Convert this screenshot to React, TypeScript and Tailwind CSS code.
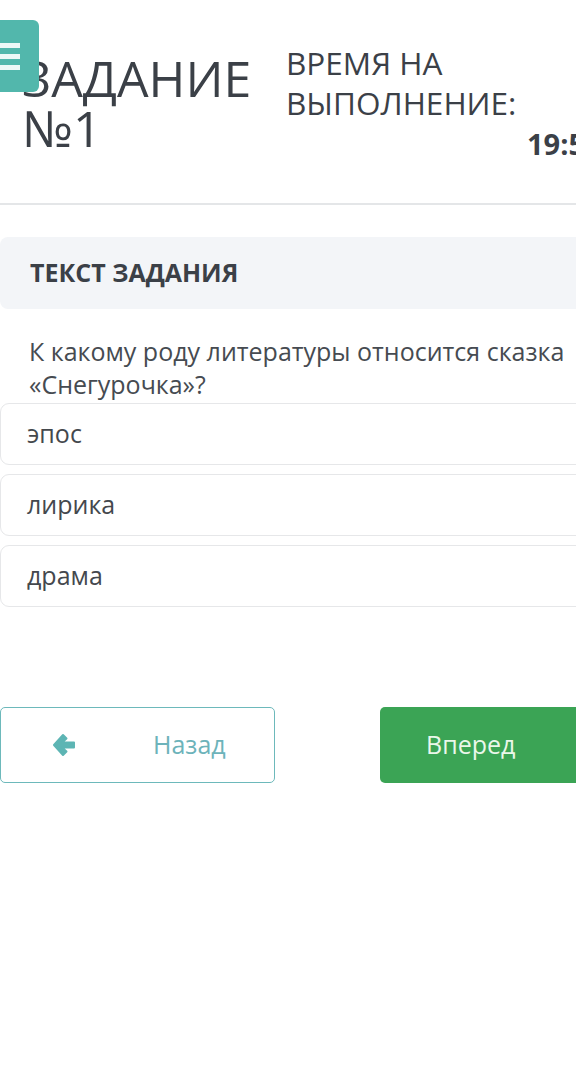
import React from 'react';

const options = ['эпос', 'лирика', 'драма'];

function MenuButton() {
  return (
    <button className="absolute left-0 top-[20px] w-[39px] h-[72px] bg-[#52b7ac] rounded-r-[6px] flex flex-col justify-center gap-[6px] pr-[19px]">
      <span className="block h-[5px] w-[20px] bg-white/90" />
      <span className="block h-[5px] w-[20px] bg-white/90" />
      <span className="block h-[5px] w-[20px] bg-white/90" />
    </button>
  );
}

export default function App() {
  return (
    <div className="relative w-[576px] h-[1080px] overflow-hidden bg-white font-['Open_Sans',sans-serif]">
      <div className="w-[640px]">
        {/* Header */}
        <div className="flex pt-[48px] h-[205px] border-b-2 border-[#e4e6e8]">
          <h1 className="w-[286px] shrink-0 pl-[22px] pt-[5px] text-[50px] leading-[50px] font-normal text-[#3b4047]">
            ЗАДАНИЕ
            <br />
            №1
          </h1>
          <div className="flex-1 -mt-[5px]">
            <div className="text-[31.5px] leading-[40px] text-[#3b4047]">
              ВРЕМЯ НА
              <br />
              ВЫПОЛНЕНИЕ:
            </div>
            <div className="pl-[241px] mt-[1px] text-[29px] leading-[40px] font-bold text-[#3b4047]">19:58</div>
          </div>
        </div>

        {/* Task */}
        <div className="pt-[32px]">
          <div className="h-[72px] flex items-center pl-[30px] bg-[#f3f5f8] rounded-l-[8px]">
            <h2 className="text-[25px] font-bold text-[#3b4047]">ТЕКСТ ЗАДАНИЯ</h2>
          </div>
          <p className="pl-[29px] pt-[26px] text-[25px] leading-[33px] text-[#464b51] whitespace-nowrap">
            К какому роду литературы относится сказка
            <br />
            «Снегурочка»?
          </p>
          <div className="flex flex-col gap-[9px] pt-[2px]">
            {options.map((o) => (
              <div
                key={o}
                className="h-[62px] flex items-center pl-[26px] border border-[#e6e7e9] rounded-[9px] text-[25px] text-[#44484d]"
              >
                {o}
              </div>
            ))}
          </div>
        </div>

        {/* Navigation */}
        <div className="flex gap-[105px] mt-[100px]">
          <button className="w-[275px] h-[76px] flex items-center border border-[#6db9bb] rounded-[5px] text-[#6db3ba] text-[25px]">
            <svg width="26" height="24" viewBox="0 0 26 24" className="ml-[50px]">
              <path
                d="M12 2 L3 12 L12 22 L15.5 18.5 L11 14.5 H23 V9.5 H11 L15.5 5.5 Z"
                fill="#5db5b4"
                stroke="#5db5b4"
                strokeWidth="2"
                strokeLinejoin="round"
              />
            </svg>
            <span className="ml-[76px]">Назад</span>
          </button>
          <button className="w-[240px] h-[76px] flex items-center pl-[46px] bg-[#3ba455] rounded-[5px] text-[#eaf7ea] text-[25px]">
            Вперед
          </button>
        </div>
      </div>
      <MenuButton />
    </div>
  );
}
